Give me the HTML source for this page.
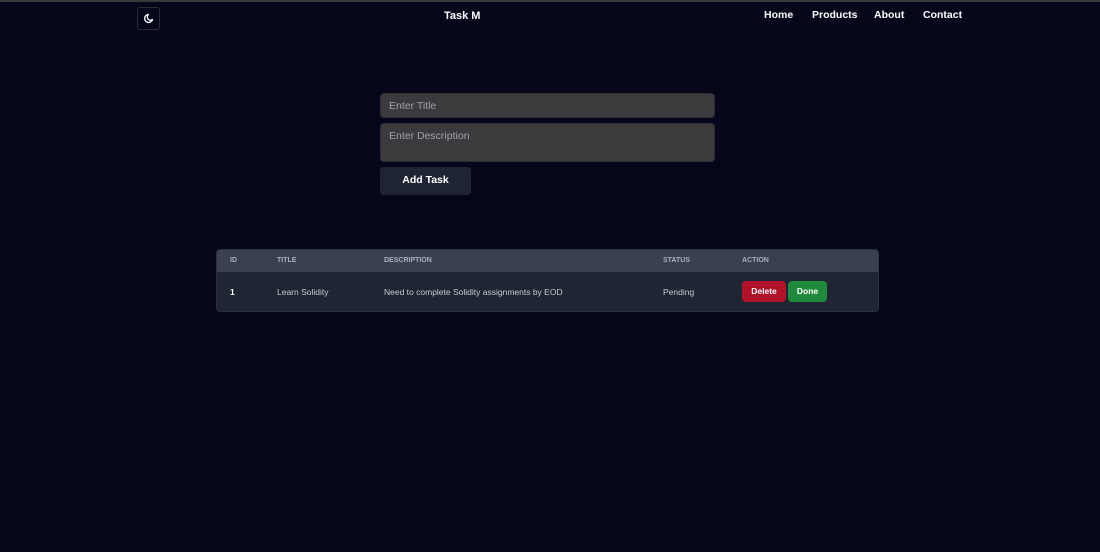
<!DOCTYPE html>
<html><head><style>
*{box-sizing:border-box;margin:0;padding:0}
body{width:1100px;height:552px;background:#05061a;font-family:"Liberation Sans",sans-serif;position:relative;overflow:hidden}
.bar{position:absolute;left:0;top:0;width:1100px;height:2px;background:#3a3a3f}
.a{position:absolute}
.nav{color:#fff;font-size:10.5px;font-weight:bold}
.inp{position:absolute;left:380px;width:335px;background:#3c3a3d;border:1px solid #2e2e34;border-radius:4px;color:#9ca3af;font-size:10.5px;padding:0 8px}
</style></head><body>
<div class="bar"></div>
<div class="a" style="left:137px;top:7px;width:23px;height:23px;border:1px solid #2a2b3a;border-radius:3px">
<svg width="21" height="21" viewBox="0 0 21 21" style="position:absolute;left:0;top:0"><path d="M10.5 6.5a4 4 0 1 0 4 5 3 3 0 0 1-4-5z" fill="none" stroke="#fff" stroke-width="1.3" stroke-linejoin="round"/></svg></div>
<div class="a nav" style="left:444px;top:10px;font-size:11px">Task M</div>
<div class="a nav" style="left:764px;top:9px">Home</div>
<div class="a nav" style="left:812px;top:9px">Products</div>
<div class="a nav" style="left:874px;top:9px">About</div>
<div class="a nav" style="left:923px;top:9px">Contact</div>
<div class="inp" style="top:93px;height:25px;line-height:24px">Enter Title</div>
<div class="inp" style="top:123px;height:39px;padding-top:6px">Enter Description</div>
<div class="a" style="left:380px;top:167px;width:91px;height:28px;background:#1e2433;border-radius:3px;color:#fff;font-size:10.5px;font-weight:bold;text-align:center;line-height:27px">Add Task</div>
<div class="a" style="left:216px;top:249px;width:663px;height:63px;background:#1f2533;border-radius:4px;overflow:hidden;border:1px solid #2a3040">
<div style="height:22px;background:#384052;color:#aab0bd;font-size:7px;font-weight:bold;position:relative">
<span class="a" style="left:13px;top:7px">ID</span><span class="a" style="left:60px;top:7px">TITLE</span><span class="a" style="left:167px;top:7px">DESCRIPTION</span><span class="a" style="left:446px;top:7px">STATUS</span><span class="a" style="left:525px;top:7px">ACTION</span></div>
<div style="position:relative;color:#c5c9d2;font-size:8.5px">
<span class="a" style="left:13px;top:15px;color:#fff;font-weight:bold">1</span><span class="a" style="left:60px;top:15px">Learn Solidity</span><span class="a" style="left:167px;top:15px">Need to complete Solidity assignments by EOD</span><span class="a" style="left:446px;top:15px">Pending</span>
<span class="a" style="left:525px;top:9px;width:44px;height:21px;background:#b0122a;border-radius:4px;color:#fff;font-weight:bold;text-align:center;line-height:21px">Delete</span>
<span class="a" style="left:571px;top:9px;width:39px;height:21px;background:#1f8a3c;border-radius:4px;color:#fff;font-weight:bold;text-align:center;line-height:21px">Done</span>
</div></div>
</body></html>
